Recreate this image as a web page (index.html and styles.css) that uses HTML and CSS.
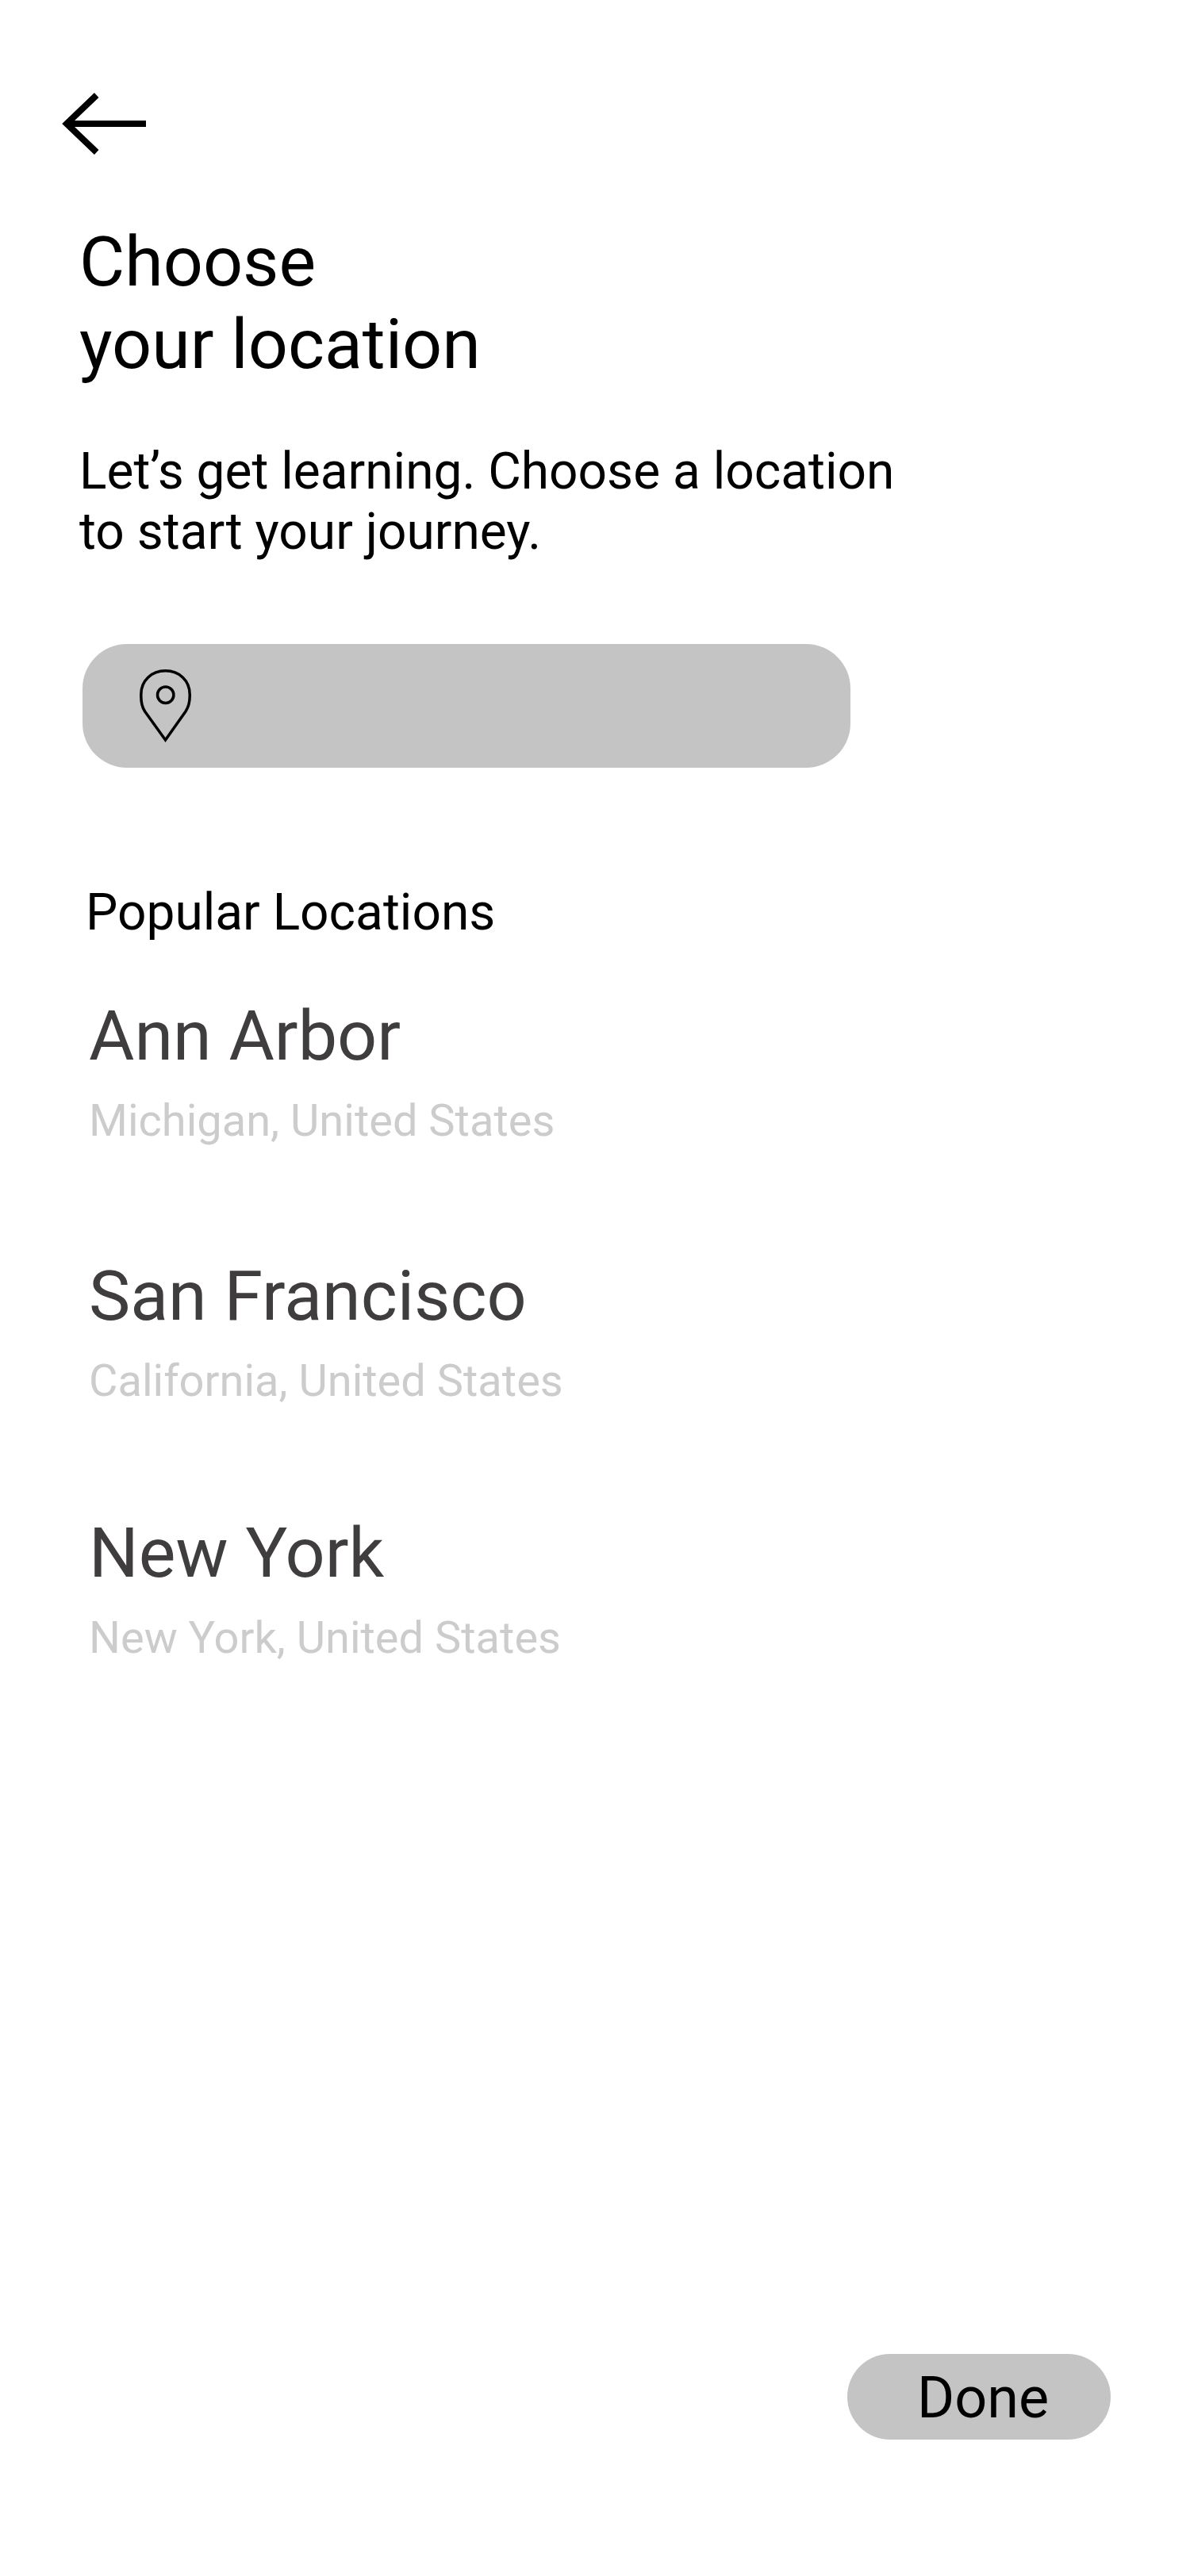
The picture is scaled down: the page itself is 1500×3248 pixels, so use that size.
FILE: index.html
```html
<!DOCTYPE html>
<html lang="en">
<head>
<meta charset="utf-8">
<title>Choose your location</title>
<link rel="stylesheet" href="styles.css">
</head>
<body>
<main class="screen">
  <a class="back" aria-label="Back">
    <svg width="112" height="84" viewBox="0 0 112 84" fill="none" stroke="#000" stroke-width="8">
      <path d="M49.7 6 12 42l37.7 36M12 42h100"/>
    </svg>
  </a>
  <h1 class="title">Choose<br>your location</h1>
  <p class="intro">Let’s get learning. Choose a location<br>to start your journey.</p>
  <div class="search">
    <svg width="68" height="96" viewBox="0 0 68 96" fill="none" stroke="#000" stroke-width="3.5">
      <path d="M34.5 93 8.6 57C5 51.5 3.8 45.5 3.8 38V35.5C3.8 18.2 16.9 5.8 34.5 5.8S65.2 18.2 65.2 35.5V38C65.2 45.5 63.5 51.5 60 57Z"/>
      <circle cx="34.7" cy="36.3" r="10.2"/>
    </svg>
  </div>
  <h2 class="heading">Popular Locations</h2>
  <ul class="places">
    <li class="place"><span class="city">Ann Arbor</span><span class="region">Michigan, United States</span></li>
    <li class="place"><span class="city">San Francisco</span><span class="region">California, United States</span></li>
    <li class="place"><span class="city">New York</span><span class="region">New York, United States</span></li>
  </ul>
  <button class="done">Done</button>
</main>
</body>
</html>
```
FILE: styles.css
```css
* {
  box-sizing: border-box;
  margin: 0;
  padding: 0;
}

body {
  background: #fff;
  color: #000;
  font-family: Roboto, sans-serif;
}

.screen {
  display: flex;
  flex-direction: column;
  align-items: flex-start;
  width: 1500px;
  height: 3248px;
  padding: 114px 100px 172px;
}

.back {
  height: 84px;
  margin-left: -28px;
}

svg {
  display: block;
}

.title {
  margin-top: 80px;
  font-size: 88px;
  font-weight: 400;
  line-height: 104px;
}

.intro {
  margin-top: 71px;
  font-size: 64px;
  line-height: 76px;
}

.search {
  display: flex;
  width: 968px;
  height: 156px;
  margin: 103px 0 0 4px;
  padding: 28px 70px;
  border-radius: 56px;
  background: #c4c4c4;
}

.heading {
  margin: 145px 0 0 8px;
  font-size: 64px;
  font-weight: 400;
  line-height: 76px;
}

.places {
  display: flex;
  flex-direction: column;
  margin: 65px 0 0 12px;
  list-style: none;
}

.place {
  display: flex;
  flex-direction: column;
  height: 328px;
}

.place:nth-child(2) {
  height: 324px;
}

.city {
  color: #3f3d3e;
  font-size: 88px;
  line-height: 104px;
}

.region {
  margin-top: 22px;
  color: #ccc;
  font-size: 56px;
  line-height: 66px;
}

.done {
  width: 332px;
  height: 108px;
  margin: auto 0 0 968px;
  padding: 3px 0 0 88px;
  border: 0;
  border-radius: 54px;
  background: #c4c4c4;
  color: #000;
  font: 400 72px/85px Roboto, sans-serif;
  text-align: left;
}
```
